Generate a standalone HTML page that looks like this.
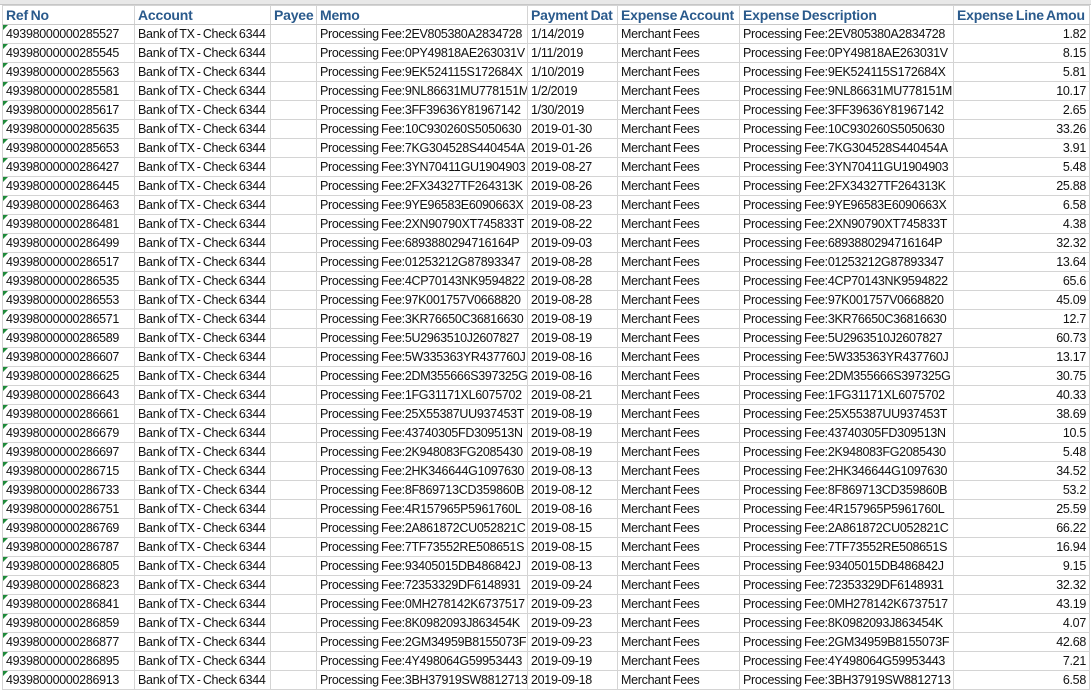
<!DOCTYPE html>
<html><head><meta charset="utf-8"><style>
*{margin:0;padding:0;box-sizing:border-box}
body{width:1091px;height:686px;overflow:hidden;background:#fff;font-family:"Liberation Sans",sans-serif;position:relative}
.top{position:absolute;left:0;top:0;width:1091px;height:5px;background:#e8e8e8;border-bottom:1px solid #c6c6c6}
table{position:absolute;left:2px;top:5px;width:1087px;border-collapse:collapse;table-layout:fixed}
td{height:19px;border:1px solid #d4d4d4;font-size:12.5px;letter-spacing:-0.3px;word-spacing:-1px;color:#111;white-space:nowrap;overflow:hidden;padding:0 3px;line-height:17px;position:relative}
tr.h td{font-weight:bold;color:#2a5a8c;font-size:14px;letter-spacing:-0.2px;border-bottom:1px solid #c8c8c8}
td.r{text-align:right}
td.g::before{content:"";position:absolute;left:0;top:0;border-top:5px solid #1e8a3a;border-right:5px solid transparent}
</style></head><body>
<div class="top"></div>
<table>
<colgroup><col style="width:132px"><col style="width:136px"><col style="width:46px"><col style="width:211px"><col style="width:90px"><col style="width:122px"><col style="width:214px"><col style="width:136px"></colgroup>
<tr class="h"><td>Ref No</td><td>Account</td><td>Payee</td><td>Memo</td><td>Payment Dat</td><td>Expense Account</td><td>Expense Description</td><td>Expense Line Amou</td></tr>
<tr><td class="g">49398000000285527</td><td>Bank of TX - Check 6344</td><td></td><td>Processing Fee:2EV805380A2834728</td><td>1/14/2019</td><td>Merchant Fees</td><td>Processing Fee:2EV805380A2834728</td><td class="r">1.82</td></tr>
<tr><td class="g">49398000000285545</td><td>Bank of TX - Check 6344</td><td></td><td>Processing Fee:0PY49818AE263031V</td><td>1/11/2019</td><td>Merchant Fees</td><td>Processing Fee:0PY49818AE263031V</td><td class="r">8.15</td></tr>
<tr><td class="g">49398000000285563</td><td>Bank of TX - Check 6344</td><td></td><td>Processing Fee:9EK524115S172684X</td><td>1/10/2019</td><td>Merchant Fees</td><td>Processing Fee:9EK524115S172684X</td><td class="r">5.81</td></tr>
<tr><td class="g">49398000000285581</td><td>Bank of TX - Check 6344</td><td></td><td>Processing Fee:9NL86631MU778151M</td><td>1/2/2019</td><td>Merchant Fees</td><td>Processing Fee:9NL86631MU778151M</td><td class="r">10.17</td></tr>
<tr><td class="g">49398000000285617</td><td>Bank of TX - Check 6344</td><td></td><td>Processing Fee:3FF39636Y81967142</td><td>1/30/2019</td><td>Merchant Fees</td><td>Processing Fee:3FF39636Y81967142</td><td class="r">2.65</td></tr>
<tr><td class="g">49398000000285635</td><td>Bank of TX - Check 6344</td><td></td><td>Processing Fee:10C930260S5050630</td><td>2019-01-30</td><td>Merchant Fees</td><td>Processing Fee:10C930260S5050630</td><td class="r">33.26</td></tr>
<tr><td class="g">49398000000285653</td><td>Bank of TX - Check 6344</td><td></td><td>Processing Fee:7KG304528S440454A</td><td>2019-01-26</td><td>Merchant Fees</td><td>Processing Fee:7KG304528S440454A</td><td class="r">3.91</td></tr>
<tr><td class="g">49398000000286427</td><td>Bank of TX - Check 6344</td><td></td><td>Processing Fee:3YN70411GU1904903</td><td>2019-08-27</td><td>Merchant Fees</td><td>Processing Fee:3YN70411GU1904903</td><td class="r">5.48</td></tr>
<tr><td class="g">49398000000286445</td><td>Bank of TX - Check 6344</td><td></td><td>Processing Fee:2FX34327TF264313K</td><td>2019-08-26</td><td>Merchant Fees</td><td>Processing Fee:2FX34327TF264313K</td><td class="r">25.88</td></tr>
<tr><td class="g">49398000000286463</td><td>Bank of TX - Check 6344</td><td></td><td>Processing Fee:9YE96583E6090663X</td><td>2019-08-23</td><td>Merchant Fees</td><td>Processing Fee:9YE96583E6090663X</td><td class="r">6.58</td></tr>
<tr><td class="g">49398000000286481</td><td>Bank of TX - Check 6344</td><td></td><td>Processing Fee:2XN90790XT745833T</td><td>2019-08-22</td><td>Merchant Fees</td><td>Processing Fee:2XN90790XT745833T</td><td class="r">4.38</td></tr>
<tr><td class="g">49398000000286499</td><td>Bank of TX - Check 6344</td><td></td><td>Processing Fee:6893880294716164P</td><td>2019-09-03</td><td>Merchant Fees</td><td>Processing Fee:6893880294716164P</td><td class="r">32.32</td></tr>
<tr><td class="g">49398000000286517</td><td>Bank of TX - Check 6344</td><td></td><td>Processing Fee:01253212G87893347</td><td>2019-08-28</td><td>Merchant Fees</td><td>Processing Fee:01253212G87893347</td><td class="r">13.64</td></tr>
<tr><td class="g">49398000000286535</td><td>Bank of TX - Check 6344</td><td></td><td>Processing Fee:4CP70143NK9594822</td><td>2019-08-28</td><td>Merchant Fees</td><td>Processing Fee:4CP70143NK9594822</td><td class="r">65.6</td></tr>
<tr><td class="g">49398000000286553</td><td>Bank of TX - Check 6344</td><td></td><td>Processing Fee:97K001757V0668820</td><td>2019-08-28</td><td>Merchant Fees</td><td>Processing Fee:97K001757V0668820</td><td class="r">45.09</td></tr>
<tr><td class="g">49398000000286571</td><td>Bank of TX - Check 6344</td><td></td><td>Processing Fee:3KR76650C36816630</td><td>2019-08-19</td><td>Merchant Fees</td><td>Processing Fee:3KR76650C36816630</td><td class="r">12.7</td></tr>
<tr><td class="g">49398000000286589</td><td>Bank of TX - Check 6344</td><td></td><td>Processing Fee:5U2963510J2607827</td><td>2019-08-19</td><td>Merchant Fees</td><td>Processing Fee:5U2963510J2607827</td><td class="r">60.73</td></tr>
<tr><td class="g">49398000000286607</td><td>Bank of TX - Check 6344</td><td></td><td>Processing Fee:5W335363YR437760J</td><td>2019-08-16</td><td>Merchant Fees</td><td>Processing Fee:5W335363YR437760J</td><td class="r">13.17</td></tr>
<tr><td class="g">49398000000286625</td><td>Bank of TX - Check 6344</td><td></td><td>Processing Fee:2DM355666S397325G</td><td>2019-08-16</td><td>Merchant Fees</td><td>Processing Fee:2DM355666S397325G</td><td class="r">30.75</td></tr>
<tr><td class="g">49398000000286643</td><td>Bank of TX - Check 6344</td><td></td><td>Processing Fee:1FG31171XL6075702</td><td>2019-08-21</td><td>Merchant Fees</td><td>Processing Fee:1FG31171XL6075702</td><td class="r">40.33</td></tr>
<tr><td class="g">49398000000286661</td><td>Bank of TX - Check 6344</td><td></td><td>Processing Fee:25X55387UU937453T</td><td>2019-08-19</td><td>Merchant Fees</td><td>Processing Fee:25X55387UU937453T</td><td class="r">38.69</td></tr>
<tr><td class="g">49398000000286679</td><td>Bank of TX - Check 6344</td><td></td><td>Processing Fee:43740305FD309513N</td><td>2019-08-19</td><td>Merchant Fees</td><td>Processing Fee:43740305FD309513N</td><td class="r">10.5</td></tr>
<tr><td class="g">49398000000286697</td><td>Bank of TX - Check 6344</td><td></td><td>Processing Fee:2K948083FG2085430</td><td>2019-08-19</td><td>Merchant Fees</td><td>Processing Fee:2K948083FG2085430</td><td class="r">5.48</td></tr>
<tr><td class="g">49398000000286715</td><td>Bank of TX - Check 6344</td><td></td><td>Processing Fee:2HK346644G1097630</td><td>2019-08-13</td><td>Merchant Fees</td><td>Processing Fee:2HK346644G1097630</td><td class="r">34.52</td></tr>
<tr><td class="g">49398000000286733</td><td>Bank of TX - Check 6344</td><td></td><td>Processing Fee:8F869713CD359860B</td><td>2019-08-12</td><td>Merchant Fees</td><td>Processing Fee:8F869713CD359860B</td><td class="r">53.2</td></tr>
<tr><td class="g">49398000000286751</td><td>Bank of TX - Check 6344</td><td></td><td>Processing Fee:4R157965P5961760L</td><td>2019-08-16</td><td>Merchant Fees</td><td>Processing Fee:4R157965P5961760L</td><td class="r">25.59</td></tr>
<tr><td class="g">49398000000286769</td><td>Bank of TX - Check 6344</td><td></td><td>Processing Fee:2A861872CU052821C</td><td>2019-08-15</td><td>Merchant Fees</td><td>Processing Fee:2A861872CU052821C</td><td class="r">66.22</td></tr>
<tr><td class="g">49398000000286787</td><td>Bank of TX - Check 6344</td><td></td><td>Processing Fee:7TF73552RE508651S</td><td>2019-08-15</td><td>Merchant Fees</td><td>Processing Fee:7TF73552RE508651S</td><td class="r">16.94</td></tr>
<tr><td class="g">49398000000286805</td><td>Bank of TX - Check 6344</td><td></td><td>Processing Fee:93405015DB486842J</td><td>2019-08-13</td><td>Merchant Fees</td><td>Processing Fee:93405015DB486842J</td><td class="r">9.15</td></tr>
<tr><td class="g">49398000000286823</td><td>Bank of TX - Check 6344</td><td></td><td>Processing Fee:72353329DF6148931</td><td>2019-09-24</td><td>Merchant Fees</td><td>Processing Fee:72353329DF6148931</td><td class="r">32.32</td></tr>
<tr><td class="g">49398000000286841</td><td>Bank of TX - Check 6344</td><td></td><td>Processing Fee:0MH278142K6737517</td><td>2019-09-23</td><td>Merchant Fees</td><td>Processing Fee:0MH278142K6737517</td><td class="r">43.19</td></tr>
<tr><td class="g">49398000000286859</td><td>Bank of TX - Check 6344</td><td></td><td>Processing Fee:8K0982093J863454K</td><td>2019-09-23</td><td>Merchant Fees</td><td>Processing Fee:8K0982093J863454K</td><td class="r">4.07</td></tr>
<tr><td class="g">49398000000286877</td><td>Bank of TX - Check 6344</td><td></td><td>Processing Fee:2GM34959B8155073F</td><td>2019-09-23</td><td>Merchant Fees</td><td>Processing Fee:2GM34959B8155073F</td><td class="r">42.68</td></tr>
<tr><td class="g">49398000000286895</td><td>Bank of TX - Check 6344</td><td></td><td>Processing Fee:4Y498064G59953443</td><td>2019-09-19</td><td>Merchant Fees</td><td>Processing Fee:4Y498064G59953443</td><td class="r">7.21</td></tr>
<tr><td class="g">49398000000286913</td><td>Bank of TX - Check 6344</td><td></td><td>Processing Fee:3BH37919SW8812713</td><td>2019-09-18</td><td>Merchant Fees</td><td>Processing Fee:3BH37919SW8812713</td><td class="r">6.58</td></tr>
</table>
</body></html>
